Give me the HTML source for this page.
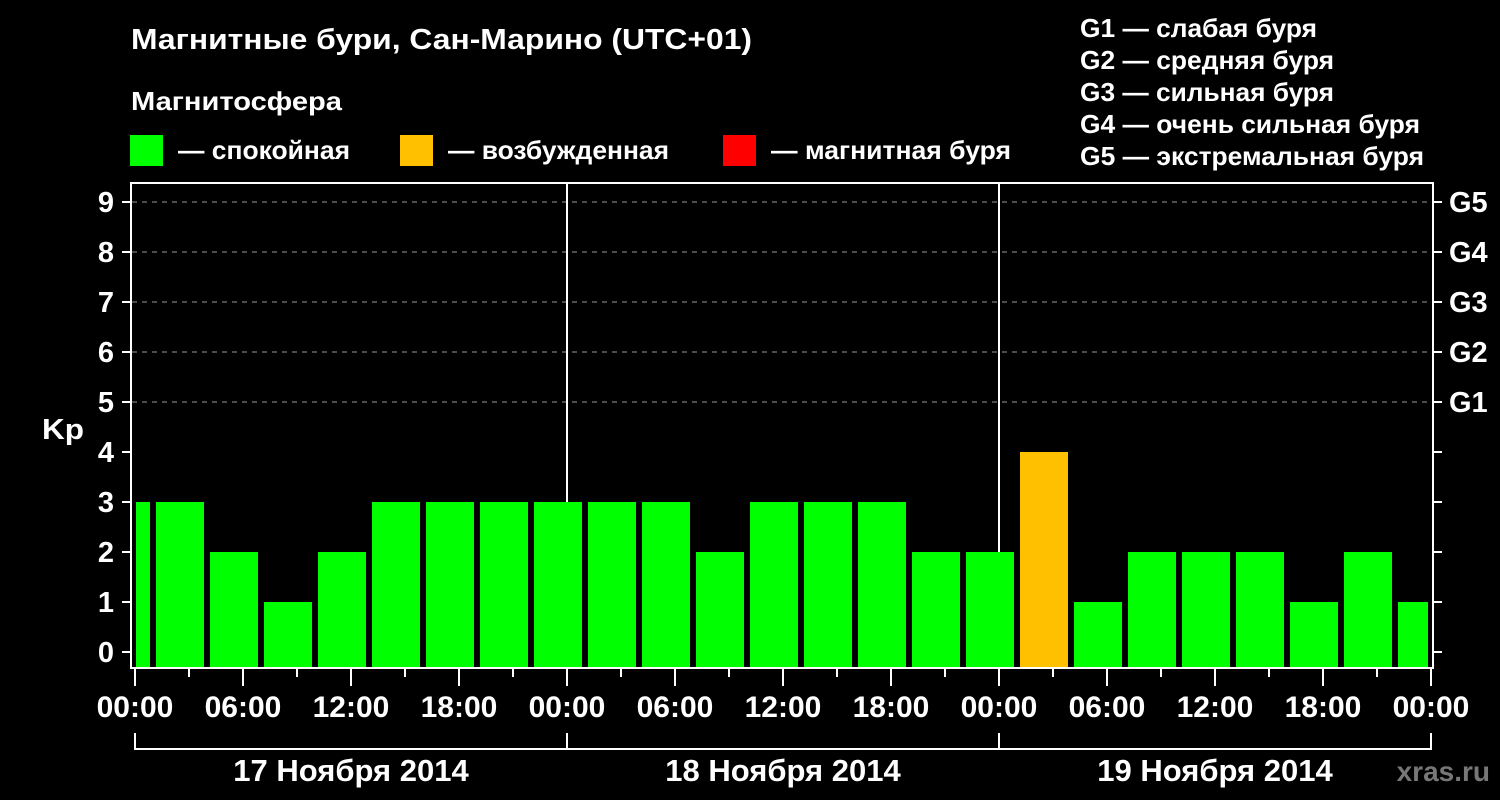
<!DOCTYPE html>
<html><head><meta charset="utf-8"><style>
html,body{margin:0;padding:0;background:#000;width:1500px;height:800px;overflow:hidden}
svg{display:block}
text{font-family:"Liberation Sans",Arial,sans-serif;font-weight:bold;fill:#fff}
</style></head><body>
<svg width="1500" height="800" viewBox="0 0 1500 800">
<rect width="1500" height="800" fill="#000"/>
<text x="131" y="49" font-size="29" textLength="621" lengthAdjust="spacingAndGlyphs">Магнитные бури, Сан-Марино (UTC+01)</text>
<text x="131" y="110" font-size="26" textLength="211" lengthAdjust="spacingAndGlyphs">Магнитосфера</text>
<rect x="130" y="135" width="33" height="31" fill="#00ff00"/>
<text x="178" y="159" font-size="26" textLength="172" lengthAdjust="spacingAndGlyphs">— спокойная</text>
<rect x="400" y="135" width="33" height="31" fill="#ffc000"/>
<text x="448" y="159" font-size="26" textLength="221" lengthAdjust="spacingAndGlyphs">— возбужденная</text>
<rect x="723" y="135" width="33" height="31" fill="#ff0000"/>
<text x="771" y="159" font-size="26" textLength="240" lengthAdjust="spacingAndGlyphs">— магнитная буря</text>
<g font-size="26">
<text x="1080" y="37" textLength="237" lengthAdjust="spacingAndGlyphs">G1 — слабая буря</text>
<text x="1080" y="69" textLength="254" lengthAdjust="spacingAndGlyphs">G2 — средняя буря</text>
<text x="1080" y="101" textLength="254" lengthAdjust="spacingAndGlyphs">G3 — сильная буря</text>
<text x="1080" y="133" textLength="340" lengthAdjust="spacingAndGlyphs">G4 — очень сильная буря</text>
<text x="1080" y="165" textLength="344" lengthAdjust="spacingAndGlyphs">G5 — экстремальная буря</text>
</g>
<g stroke="#999" stroke-width="1" stroke-dasharray="5,5">
<line x1="132" y1="202" x2="1432" y2="202"/>
<line x1="132" y1="252" x2="1432" y2="252"/>
<line x1="132" y1="302" x2="1432" y2="302"/>
<line x1="132" y1="352" x2="1432" y2="352"/>
<line x1="132" y1="402" x2="1432" y2="402"/>
</g>
<g stroke="#fff" stroke-width="2">
<line x1="567" y1="183" x2="567" y2="668"/>
<line x1="999" y1="183" x2="999" y2="668"/>
</g>
<g fill="#00ff00">
<rect x="136" y="502" width="14" height="166"/>
<rect x="156" y="502" width="48" height="166"/>
<rect x="210" y="552" width="48" height="116"/>
<rect x="264" y="602" width="48" height="66"/>
<rect x="318" y="552" width="48" height="116"/>
<rect x="372" y="502" width="48" height="166"/>
<rect x="426" y="502" width="48" height="166"/>
<rect x="480" y="502" width="48" height="166"/>
<rect x="534" y="502" width="48" height="166"/>
<rect x="588" y="502" width="48" height="166"/>
<rect x="642" y="502" width="48" height="166"/>
<rect x="696" y="552" width="48" height="116"/>
<rect x="750" y="502" width="48" height="166"/>
<rect x="804" y="502" width="48" height="166"/>
<rect x="858" y="502" width="48" height="166"/>
<rect x="912" y="552" width="48" height="116"/>
<rect x="966" y="552" width="48" height="116"/>
<rect x="1074" y="602" width="48" height="66"/>
<rect x="1128" y="552" width="48" height="116"/>
<rect x="1182" y="552" width="48" height="116"/>
<rect x="1236" y="552" width="48" height="116"/>
<rect x="1290" y="602" width="48" height="66"/>
<rect x="1344" y="552" width="48" height="116"/>
<rect x="1398" y="602" width="30" height="66"/>
</g>
<rect x="1020" y="452" width="48" height="216" fill="#ffc000"/>
<rect x="131" y="183" width="1302" height="485" fill="none" stroke="#fff" stroke-width="2"/>
<g stroke="#fff" stroke-width="2">
<path d="M122 202H131M122 252H131M122 302H131M122 352H131M122 402H131M122 452H131M122 502H131M122 552H131M122 602H131M122 652H131"/>
<path d="M1433 202H1442M1433 252H1442M1433 302H1442M1433 352H1442M1433 402H1442M1433 452H1442M1433 502H1442M1433 552H1442M1433 602H1442M1433 652H1442"/>
<path d="M135 668V686M243 668V686M351 668V686M459 668V686M567 668V686M675 668V686M783 668V686M891 668V686M999 668V686M1107 668V686M1215 668V686M1323 668V686M1431 668V686"/>
<path d="M189 668V677M297 668V677M405 668V677M513 668V677M621 668V677M729 668V677M837 668V677M945 668V677M1053 668V677M1161 668V677M1269 668V677M1377 668V677"/>
<path d="M135 733V749H1431V733M567 733V749M999 733V749" fill="none"/>
</g>
<g font-size="29" text-anchor="middle">
<text x="106" y="212">9</text><text x="106" y="262">8</text><text x="106" y="312">7</text>
<text x="106" y="362">6</text><text x="106" y="412">5</text><text x="106" y="462">4</text>
<text x="106" y="512">3</text><text x="106" y="562">2</text><text x="106" y="612">1</text>
<text x="106" y="662">0</text>
</g>
<text x="42" y="439" font-size="29" textLength="42" lengthAdjust="spacingAndGlyphs">Kp</text>
<g font-size="29">
<text x="1449" y="212">G5</text><text x="1449" y="262">G4</text><text x="1449" y="312">G3</text>
<text x="1449" y="362">G2</text><text x="1449" y="412">G1</text>
</g>
<g font-size="30" text-anchor="middle">
<text x="135" y="717">00:00</text><text x="243" y="717">06:00</text><text x="351" y="717">12:00</text>
<text x="459" y="717">18:00</text><text x="567" y="717">00:00</text><text x="675" y="717">06:00</text>
<text x="783" y="717">12:00</text><text x="891" y="717">18:00</text><text x="999" y="717">00:00</text>
<text x="1107" y="717">06:00</text><text x="1215" y="717">12:00</text><text x="1323" y="717">18:00</text>
<text x="1431" y="717">00:00</text>
</g>
<g font-size="31" text-anchor="middle">
<text x="351" y="781">17 Ноября 2014</text>
<text x="783" y="781">18 Ноября 2014</text>
<text x="1215" y="781">19 Ноября 2014</text>
</g>
<text x="1490" y="781" font-size="28" text-anchor="end" style="fill:#777">xras.ru</text>
</svg>
</body></html>
